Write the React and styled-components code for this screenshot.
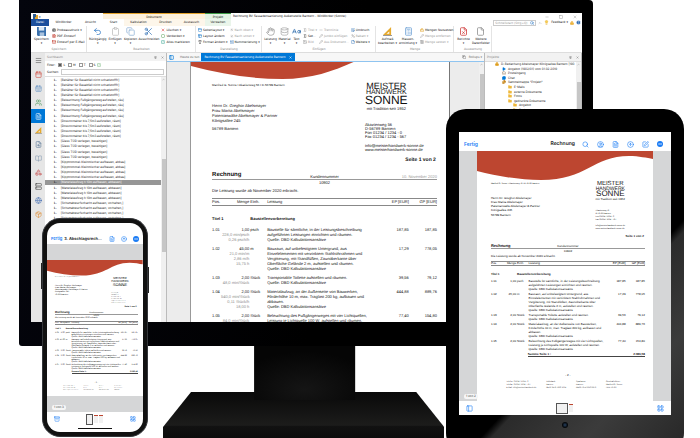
import React from "react";
import styled, { createGlobalStyle, css } from "styled-components";
import {
  Save, Printer, FileText, Mail, Undo2, Clipboard, Copy, Scissors, X, BoxSelect, CheckSquare,
  PanelTop, Layout, Type, ArrowUpLeft, ArrowDownLeft, ListOrdered, Hand, Database, CaseSensitive,
  Sigma, Image, Minus, Pencil, WrapText, Percent, File, Triangle, Calculator, Lock,
  Menu, Calendar, CalendarDays, Users, FileSearch, BookOpen, Shapes, Server, Globe, Package,
  Search, CircleUser, CircleArrowUp, SquarePen, Folder, Lightbulb, CircleHelp, Pin, Square,
  LayoutGrid, PanelLeft, Archive, MessageCircle, Inbox, Files, FileX, ChevronUp, Ellipsis, Play,
} from "lucide-react";

const UI = '"DejaVu Sans", sans-serif';
const TREE = 'Inter, sans-serif';
const PAPER = '"Liberation Sans", Arial, sans-serif';
const TOUCH = 'Inter, sans-serif';
const BLUE = "#0078d7";
const IOS = "#1a7cf5";
const RED = "#bd4630";

const Global = createGlobalStyle`
  * { box-sizing: border-box; }
  body { margin: 0; background: #fff; text-rendering: geometricPrecision; }
  button { border: 0; padding: 0; margin: 0; background: none; font: inherit; color: inherit; }
  svg { display: block; flex: none; }
`;

/* ---------- stage and devices ---------- */

const Stage = styled.main`
  position: relative;
  aspect-ratio: 700 / 438;
  overflow: hidden;
  display: grid;
  grid-template-columns: 19fr 574fr 107fr;
  align-content: start;
`;
const Computer = styled.section`
  grid-column: 2;
`;
const Bezel = styled.div`
  padding: 13px 11px 24px 12px;
  background: linear-gradient(100deg, #04050d, #000 55%);
  border-radius: 0 4px 3px 3px;
`;
const Display = styled.div`
  aspect-ratio: 551 / 309;
  overflow: hidden;
  background: #fff;
  display: flex;
  flex-direction: column;
  font: 3px/4px ${UI};
  color: #111;
`;
const Stand = styled.svg`
  width: 49%;
  margin-left: 25%;
`;
const Phone = styled.section`
  position: absolute;
  left: 6%;
  top: 49.8%;
  width: 15.1%;
  aspect-ratio: 106 / 220;
  padding: 4px;
  background: #111;
  border: 1px solid #34363a;
  border-radius: 18px;
  &::before, &::after {
    content: "";
    position: absolute;
    width: 1px;
    background: #222;
  }
  &::before { left: -2px; top: 20%; height: 12%; }
  &::after { right: -2px; top: 22%; height: 12%; }
`;
const PhoneScreen = styled.div`
  height: 100%;
  overflow: hidden;
  border-radius: 13px;
  background: #fff;
  display: flex;
  flex-direction: column;
`;
const Tablet = styled.section`
  position: absolute;
  left: 63.7%;
  top: 24.9%;
  width: 34%;
  aspect-ratio: 238 / 331;
  padding: 23px 13px 25px;
  border-radius: 20px;
  background: linear-gradient(133deg, #000 61%, #2b2b2b 63%, #3b3b3b 80%, #262626);
`;
const TabletScreen = styled.div`
  height: 100%;
  overflow: hidden;
  background: #fff;
  display: flex;
  flex-direction: column;
`;
const Camera = styled.div`
  width: 6px;
  height: 6px;
  margin: 7px auto 0;
  border-radius: 50%;
  background: radial-gradient(#27415f, #05080c 60%);
`;

/* ---------- letter ---------- */

const sizes = {
  desktop: {
    pad: "21px 12px 0 21px", wave: 18, text: 4, line: 5, sender: 3, afterSender: 15, postal: 3,
    logo: [9, 7, 12], logoLines: [7, 6, 9], logoGap: 1, contact: 4, contactLine: 4, contactTop: 12,
    contactGap: 5, pageTop: 6, page: 5, headTop: 9, head: 6, headLine: 7, introTop: 3, tableTop: 5,
    th: 6, sectionTop: 10, firstTop: 6, rowTop: 4,
    cols: ["4%", "13%", "7.5%", "50%", "13%", "12.5%"],
  },
  tablet: {
    pad: "31px 8px 0 14px", wave: 30, text: 3, line: 4, sender: 2, afterSender: 10, postal: 1,
    logo: [6, 5, 8], logoLines: [5, 4, 6], logoGap: 0, contact: 2, contactLine: 3, contactTop: 9,
    contactGap: 3, pageTop: 3, page: 3, headTop: 5, head: 4, headLine: 5, introTop: 1, tableTop: 3,
    th: 3, sectionTop: 6, firstTop: 3, rowTop: 1,
    cols: ["4%", "13%", "7.5%", "50%", "13%", "12.5%"],
  },
  phone: {
    pad: "17px 5px 0 8px", wave: 16, text: 2, line: 2, sender: 1, afterSender: 6, postal: 1,
    logo: [3, 3, 4], logoLines: [3, 3, 3], logoGap: 0, contact: 1, contactLine: 2, contactTop: 5,
    contactGap: 0, pageTop: 1, page: 2, headTop: 3, head: 3, headLine: 3, introTop: 0, tableTop: 2,
    th: 2, sectionTop: 3, firstTop: 2, rowTop: 1,
    cols: ["6%", "7%", "7%", "54%", "13%", "13%"],
  },
};

const Sheet = styled.article`
  display: grid;
  grid-template: 1fr / minmax(0, 1fr);
  background: #fff;
  overflow: hidden;
  min-height: 0;
  font-family: ${PAPER};
  font-size: ${(p) => p.$s.text}px;
  line-height: ${(p) => p.$s.line}px;
  color: #111;
  white-space: nowrap;
`;
const Wave = styled.svg`
  grid-area: 1 / 1;
  width: 100%;
  height: ${(p) => p.$s.wave}px;
`;
const Copytext = styled.div`
  grid-area: 1 / 1;
  min-width: 0;
  padding: ${(p) => p.$s.pad};
`;
const LetterHead = styled.header`
  display: grid;
  grid-template-columns: 68fr 32fr;
`;
const Sender = styled.div`
  font-size: ${(p) => p.$s.sender}px;
  margin-bottom: ${(p) => p.$s.afterSender}px;
`;
const Postal = styled.div`
  margin-top: ${(p) => p.$s.postal}px;
`;
const LogoLine = styled.div`
  font-size: ${(p) => p.$s.logo[p.$n]}px;
  line-height: ${(p) => p.$s.logoLines[p.$n]}px;
`;
const LogoBox = styled.div`
  display: flex;
  flex-direction: column;
  width: max-content;
  text-align: center;
`;
const Claim = styled.div`
  margin-top: ${(p) => p.$s.logoGap}px;
  font-size: ${(p) => (p.$s.text === 3 ? 3 : p.$s.contact)}px;
`;
const Contact = styled.address`
  font-style: normal;
  font-size: ${(p) => p.$s.contact}px;
  line-height: ${(p) => p.$s.contactLine}px;
  margin-top: ${(p) => (p.$web ? p.$s.contactGap : p.$s.contactTop)}px;
  white-space: pre-line;
`;
const PageNo = styled.div`
  margin: ${(p) => p.$s.pageTop}px 1px 0 0;
  font-weight: 700;
  font-size: ${(p) => p.$s.page}px;
  text-align: right;
`;
const TitleRow = styled.div`
  display: grid;
  grid-template-columns: 1fr auto 1fr;
  align-items: end;
  margin-top: ${(p) => p.$s.headTop}px;
  border-bottom: 1px solid #999;
`;
const Heading = styled.h2`
  margin: 0;
  font-size: ${(p) => p.$s.head}px;
  line-height: ${(p) => p.$s.headLine}px;
`;
const DateText = styled.time`
  text-align: right;
  color: #999;
`;
const Customer = styled.div`
  text-align: center;
`;
const Intro = styled.p`
  margin: ${(p) => p.$s.introTop}px 0 ${(p) => p.$s.tableTop}px;
`;
const Items = styled.table`
  width: 100%;
  table-layout: fixed;
  border-collapse: collapse;
  th, td { padding: 0; font-weight: 400; text-align: left; vertical-align: top; }
  thead th { border: solid #888; border-width: 1px 0; line-height: ${(p) => p.$s.th}px; }
  tbody td { padding-top: ${(p) => p.$s.rowTop}px; }
  tbody tr:first-child th { padding-top: ${(p) => p.$s.sectionTop}px; font-weight: 700; }
  tbody tr:nth-child(2) td { padding-top: ${(p) => p.$s.firstTop}px; }
`;
const Cell = styled.td`
  white-space: pre;
  && { text-align: ${(p) => (p.$right ? "right" : "left")}; }
  ${(p) => p.$num && css`&& { padding-right: 1px; }`}
`;
const HeadCell = styled.th`
  && { text-align: ${(p) => (p.$right ? "right" : "left")}; }
  ${(p) => p.$num && css`&& { padding-right: 1px; }`}
`;
const Muted = styled.span`
  color: #8c8c8c;
`;
const Sum = styled.div`
  display: flex;
  justify-content: space-between;
  margin: ${(p) => p.$s.rowTop}px 0 0 ${(p) => (p.$s.text === 2 ? "20%" : "24%")};
  border-bottom: 1px solid #444;
  font-weight: 700;
`;
const Folio = styled.div`
  margin-top: ${(p) => p.$s.line * 4}px;
  text-align: center;
`;
const Footer = styled.footer`
  display: flex;
  gap: 8%;
  padding: ${(p) => p.$s.line}px 10%;
  font-size: ${(p) => p.$s.contact}px;
  line-height: ${(p) => p.$s.contactLine}px;
  color: #444;
  white-space: pre;
`;

const items = [
  ["1.01", "1,00", "psch", ["228,0 min/psch", "0,26 psch/h"], "Baustelle für sämtliche, in der Leistungsbeschreibung\naufgeführten Leistungen einrichten und räumen.\nQuelle: DBD Kalkulationsansätze", "187,85", "187,85"],
  ["1.02", "45,00", "m", ["21,0 min/m", "2,86 m/h", "15,75 h"], "Bauzaun, auf unbefestigtem Untergrund, aus\nEinzelelementen mit verzinktem Stahlrohrrahmen und\nVergitterung, mit Standfüßen, Zaunoberkante über\nOberfläche Gelände 2 m, aufstellen und räumen.\nQuelle: DBD Kalkulationsansätze", "17,29", "778,05"],
  ["1.03", "2,00", "Stück", ["48,0 min/Stück"], "Transportable Toilette aufstellen und räumen.\nQuelle: DBD Kalkulationsansätze", "39,56", "79,12"],
  ["1.04", "2,00", "Stück", ["540,0 min/Stück", "0,11 Stück/h", "18,00 h"], "Materialaufzug, an der Außenseite von Bauwerken,\nFörderhöhe 10 m, max. Traglast 200 kg, aufbauen und\nabbauen.\nQuelle: DBD Kalkulationsansätze", "444,88", "889,76"],
  ["1.05", "2,00", "Stück", ["84,0 min/Stück"], "Beleuchtung des Fußgängerweges mit vier Lichtquellen,\nLeistung je Lichtquelle 100 W, aufstellen und räumen.\nQuelle: DBD Kalkulationsansätze", "77,40", "154,80"],
];

function Letter({ kind }) {
  const s = sizes[kind];
  const desktop = kind === "desktop";
  return (
    <Sheet $s={s}>
      <Wave $s={s} viewBox={desktop ? "0 0 257 18" : "0 0 176 30"} preserveAspectRatio="none" aria-hidden="true">
        <path fill={RED} d={desktop ? "M0 0V4C30 12 60 17 91 17C120 17 142 9 162 0Z" : "M0 0V20C20 25 42 29 64 29C110 29 116 5 152 5C162 5 170 7 176 8V0Z"} />
      </Wave>
      <Copytext $s={s}>
        <LetterHead>
          <div>
            <Sender $s={s}>Manfred G. Sonne I Akazienweg 56 I D-56789 Bantern</Sender>
            <div>Herrn Dr. Greghor Abelsmayer</div>
            <div>Frau Marita Abelsmayer</div>
            <div>Patentanwälte Abelsmayer &amp; Partner</div>
            <div>Königsallee 245</div>
            <Postal $s={s}>56789 Bantern</Postal>
          </div>
          <div>
            <LogoBox>
              <LogoLine $s={s} $n={0}>MEISTER</LogoLine>
              <LogoLine $s={s} $n={1}>HANDWERK</LogoLine>
              <LogoLine $s={s} $n={2}>SONNE</LogoLine>
              <Claim $s={s}>mit Tradition seit 1952</Claim>
            </LogoBox>
            <Contact $s={s}>{"Akazienweg 56\nD-56789 Bantern\nFon 01234 / 1234 - 0\nFax 01234 / 1234 - 567"}</Contact>
            <Contact $s={s} $web>{"info@meisterhandwerk-sonne.de\nwww.meisterhandwerk-sonne.de"}</Contact>
            <PageNo $s={s}>Seite 1 von 2</PageNo>
          </div>
        </LetterHead>
        <TitleRow $s={s}>
          <Heading $s={s}>Rechnung</Heading>
          <span>Kundennummer</span>
          {desktop && <DateText>10. November 2020</DateText>}
        </TitleRow>
        <Customer>10902</Customer>
        <Intro $s={s}>Die Leistung wurde ab November 2020 erbracht.</Intro>
        <Items $s={s}>
          <colgroup>{s.cols.map((w, i) => <col key={i} width={w} />)}</colgroup>
          <thead>
            <tr>
              <HeadCell>Pos.</HeadCell>
              <HeadCell $right $num>Menge</HeadCell>
              <HeadCell>Einh.</HeadCell>
              <HeadCell>Leistung</HeadCell>
              <HeadCell $right>EP [EUR]</HeadCell>
              <HeadCell $right>GP [EUR]</HeadCell>
            </tr>
          </thead>
          <tbody>
            <tr><HeadCell colSpan={2}>Titel 1</HeadCell><HeadCell colSpan={4}>Baustellenvorbereitung</HeadCell></tr>
            {items.map(([pos, n, unit, sub, text, ep, gp]) => (
              <tr key={pos}>
                <Cell>{pos}</Cell>
                <Cell $right $num>{n}{desktop && <Muted>{"\n" + sub.join("\n")}</Muted>}</Cell>
                <Cell>{unit}</Cell>
                <Cell>{text}</Cell>
                <Cell $right>{ep}</Cell>
                <Cell $right>{gp}</Cell>
              </tr>
            ))}
          </tbody>
        </Items>
        {!desktop && (
          <>
            <Sum $s={s}><span>Summe Seite 1 :</span><span>2.089,58</span></Sum>
            <Folio $s={s}>- 2 -</Folio>
            <Footer $s={s}>
              <span>{"Telefon  01234 / 1234 - 0\nTelefax  01234 / 1234 - 567\nE-Mail  info@meisterhandwerk.de"}</span>
              <span>{"Volksbank\nBantern\nDE12 3456 7890 1234"}</span>
              <span>{"Sparkasse\nBantern\nDE98 7654 3210 9876"}</span>
              <span>{"Geschäftsführer\nManfred G. Sonne\nHRB 56789"}</span>
            </Footer>
          </>
        )}
      </Copytext>
    </Sheet>
  );
}

/* ---------- desktop window chrome ---------- */

const TitleBar = styled.div`
  display: grid;
  grid-template-columns: 72fr 102fr 26fr 351fr;
  height: 6px;
  line-height: 6px;
  white-space: nowrap;
`;
const Quick = styled.div`
  display: flex;
  align-items: center;
  gap: 1px;
  padding-left: 2px;
`;
const Context = styled.div`
  text-align: center;
  background: ${(p) => (p.$green ? "#e3f2e3" : "#fdf1dc")};
  border-top: 1px solid ${(p) => (p.$green ? "#3d9a46" : "#e3a32c")};
`;
const Caption = styled.div`
  display: flex;
  justify-content: space-between;
  padding: 0 5px 0 2px;
`;
const WindowButtons = styled.div`
  display: flex;
  align-items: center;
  gap: 10px;
  color: #777;
`;
const TabRow = styled.nav`
  display: grid;
  grid-template-columns: 18fr 29fr 25fr 21fr 29fr 25fr 27fr 26fr 351fr;
  height: 7px;
  line-height: 7px;
  text-align: center;
`;
const RibbonTab = styled.button`
  text-align: center;
  background: ${(p) => p.$bg || "#fff"};
  color: ${(p) => (p.$file ? "#fff" : "#222")};
`;
const TabTools = styled.div`
  display: flex;
  justify-content: flex-end;
  align-items: center;
  gap: 2px;
  padding-right: 1px;
`;
const QuickSearch = styled.label`
  display: flex;
  align-items: center;
  width: 43px;
  height: 6px;
  padding: 0 1px;
  border: 1px solid #ccc;
`;
const Field = styled.input`
  flex: 1;
  min-width: 0;
  height: ${(p) => (p.$boxed ? 6 : 4)}px;
  padding: 0;
  border: ${(p) => (p.$boxed ? "1px solid #ccc" : "0")};
  outline: 0;
  background: #fff;
  font: 3px/4px ${UI};
  &::placeholder { color: #999; }
`;
const Ribbon = styled.div`
  display: grid;
  grid-template-columns: 56fr 109fr 66fr 114fr 78fr 38fr 90fr;
  height: 27px;
  flex: none;
  border-bottom: 1px solid #ddd;
`;
const Group = styled.section`
  display: flex;
  flex-direction: column;
  justify-content: space-between;
  padding: 1px 1px 1px 2px;
  border-right: 1px solid #e4e4e4;
  white-space: nowrap;
  min-width: 0;
`;
const GroupBody = styled.div`
  display: flex;
  gap: 2px;
`;
const GroupName = styled.div`
  text-align: center;
  color: #888;
`;
const BigSet = styled.div`
  display: flex;
  align-items: flex-start;
  gap: 1px;
`;
const Big = styled.button`
  display: flex;
  flex-direction: column;
  align-items: center;
  min-width: ${(p) => p.$w}px;
  line-height: 4px;
  color: #111;
  white-space: pre-line;
  svg { margin-bottom: 1px; }
`;
const SmallCol = styled.div`
  display: flex;
  flex-direction: column;
  gap: 2px;
  min-width: 0;
  padding-top: 1px;
`;
const Small = styled.button`
  display: flex;
  align-items: center;
  gap: 1px;
  height: 4px;
  color: ${(p) => (p.$off ? "#999" : "#111")};
`;

const groups = [
  ["Speichern", [[Save, "Speichern\n▾", "#2d6cb0", 17]], [[[Printer, "Probeausdruck ▾", "#444"], [FileText, "PDF-Entwurf", "#c0392b"], [Mail, "Entwurf per E-Mail", "#c0392b"]]]],
  ["Bearbeiten", [[Undo2, "Rückgängig\n▾", "#2f78c4", 17], [Clipboard, "Einfügen\n▾", "#bbb", 15], [Copy, "Kopieren\n▾", "#8fb2d6", 14], [Scissors, "Ausschneiden", "#3b78b8", 20]], [[[X, "Löschen ▾", "#d33"], [BoxSelect, "Verdecken ▾", "#6a6"], [CheckSquare, "Alles markieren", "#4a9"]]]],
  ["Darstellung", [], [[[PanelTop, "Seitenlayout ▾", "#3b8bd0"], [Layout, "Layout ändern", "#3b8bd0"], [Type, "Format ändern ▾", "#333"]], [[ArrowUpLeft, "Nach oben ▾", "#aaa", 1], [ArrowDownLeft, "Nach unten ▾", "#aaa", 1], [ListOrdered, "Nummerierung ▾", "#3b78b8"]]]],
  ["Einfügen", [[Hand, "Leistung\n▾", "#999", 13], [Database, "Material\n▾", "#aaa", 13], [CaseSensitive, "Text\n▾", "#336fae", 9]], [[[Sigma, "Titel ▾", "#999", 1], [Sigma, "Set...", "#444"], [Image, "Bild", "#aaa", 1]], [[Minus, "Trennlinie", "#aaa", 1], [Pencil, "Jumbo einfügen", "#aaa", 1], [Pencil, "Aus Dokument...", "#aaa", 1]], [[WrapText, "Umbruch", "#3b78b8"], [Percent, "Rabatt ▾", "#aaa", 1], [File, "Weitere ▾", "#3b78b8"]]]],
  ["Menge", [[Triangle, "Aufmaß\nbearbeiten ▾", "#e0a020", 19], [Calculator, "Massen-\nermittlung ▾", "#6ea1d6", 20]], [[[Lock, "Mengen festsetzen", "#e0a020"], [Pencil, "Menge entfernen", "#aaa", 1], [Calculator, "Menge setzen ▾", "#999", 1]]]],
  ["Auswertung", [[FileX, "Berichte\n▾", "#c33", 15], [File, "Weitere\nDatenfelder", "#888", 17]], []],
];

function AngleIcon({ size }) {
  return (
    <svg width={size} height={size} viewBox="0 0 10 10" aria-hidden="true">
      <path d="M9 0V9H0ZM7 5L4 7.5H7Z" fill="#e6aa2e" fillRule="evenodd" />
      <path d="M0 9.5H10" stroke="#888" strokeWidth="1" />
    </svg>
  );
}
function SaveIcon({ size }) {
  return (
    <svg width={size} height={size} viewBox="0 0 10 10" aria-hidden="true">
      <path d="M0 0H10V10H1L0 9Z" fill="#3a70ac" />
      <path d="M2 0H8V4H2Z" fill="#dce8f5" />
      <path d="M3 6H8V10H3Z" fill="#a9c2dd" />
    </svg>
  );
}

function RibbonIcon({ icon: Icon, color }) {
  if (Icon === Triangle) return <AngleIcon size={9} />;
  if (Icon === Save) return <SaveIcon size={9} />;
  return <Icon size={9} color={color} strokeWidth={2} />;
}

/* ---------- desktop body ---------- */

const Body = styled.div`
  flex: 1;
  min-height: 0;
  display: grid;
  grid-template-columns: 14fr 122fr 318fr 97fr;
`;
const Rail = styled.nav`
  background: #e6e6e6;
  display: flex;
  flex-direction: column;
`;
const RailButton = styled.button`
  height: 14px;
  display: grid;
  place-items: center;
  background: ${(p) => (p.$on ? BLUE : "transparent")};
`;
const Pane = styled.section`
  display: flex;
  flex-direction: column;
  min-width: 0;
  min-height: 0;
  overflow: hidden;
  border-right: 1px solid #bbb;
  background: #fff;
`;
const PaneHead = styled.header`
  display: flex;
  align-items: center;
  justify-content: space-between;
  height: 8px;
  flex: none;
  padding: 0 2px;
  background: #f2f2f2;
  color: #888;
`;
const Inline = styled.div`
  display: flex;
  align-items: center;
  gap: 4px;
`;
const Filters = styled.div`
  display: flex;
  align-items: center;
  gap: 2px;
  height: 7px;
  padding: 0 2px;
`;
const Check = styled.label`
  display: flex;
  align-items: center;
  gap: 1px;
  margin-left: 1px;
`;
const Tick = styled.input`
  appearance: none;
  width: 4px;
  height: 4px;
  margin: 0;
  border: 1px solid #999;
  background: ${(p) => (p.defaultChecked ? "#555" : "#fff")};
`;
const SearchRow = styled.label`
  display: flex;
  align-items: center;
  gap: 2px;
  height: 8px;
  padding: 0 2px;
`;
const TreeArea = styled.div`
  flex: 1;
  min-height: 0;
  display: flex;
  border-top: 1px solid #ddd;
`;
const TreeList = styled.ul`
  flex: 1;
  min-width: 0;
  height: ${(p) => p.$h}px;
  margin: 0;
  padding: 0;
  overflow: hidden;
  list-style: none;
  display: grid;
  grid-auto-rows: 1fr;
  font-family: ${TREE};
  white-space: nowrap;
`;
const TreeRow = styled.li`
  display: flex;
  align-items: center;
  gap: ${(p) => (p.$depth ? 2 : 4)}px;
  padding-left: ${(p) => p.$depth || 9}px;
  background: ${(p) => (p.$on ? "#969696" : "transparent")};
  color: ${(p) => (p.$on ? "#fff" : "#222")};
  b { color: #111; }
`;
const Scroll = styled.div`
  width: 5px;
  flex: none;
  background: #f0f0f0;
  display: flex;
  flex-direction: column;
  align-items: center;
  padding-top: 1px;
  color: #555;
`;
const Thumb = styled.div`
  width: 4px;
  height: ${(p) => p.$h}%;
  margin-top: ${(p) => p.$top}px;
  background: #c6c6c6;
`;
const DocTabs = styled.div`
  display: flex;
  align-items: stretch;
  height: 9px;
  flex: none;
  background: #f7f7f7;
  border-bottom: 1px solid #8fc4f0;
`;
const DocTab = styled.button`
  display: flex;
  align-items: center;
  gap: 3px;
  padding: 0 ${(p) => (p.$on ? 3 : 2)}px;
  background: ${(p) => (p.$on ? BLUE : "transparent")};
  color: ${(p) => (p.$on ? "#fff" : "#666")};
`;
const IconTab = styled(DocTab)`
  padding: 0 4px 0 2px;
`;
const Spacer = styled.div`
  flex: 1;
`;
const Workspace = styled.div`
  flex: 1;
  min-height: 0;
  display: grid;
  grid-template-columns: 24fr 258fr 29fr 5px;
  background: #ececec;
`;
const Margin = styled.div`
  border-right: ${(p) => (p.$edge ? "1px solid #999" : "0")};
`;
const PaperEdge = styled.div`
  display: grid;
  min-height: 0;
  overflow: hidden;
  border-right: 1px solid #777;
`;

const names = [
  "[Behälter für Bauabfall nicht schadstofffr]",
  "[Beleuchtung Fußgängerweg aufstellen, räu]",
  "[Rosscontainer bis 7,5m3 aufstellen, räum]",
  "[Glass TÜR verlegen, beseitigen]",
  "[Kipptrommel-Kleinmischer aufbauen, abbau]",
  "[Materialaufzug h 10m aufbauen, abbauen]",
  "[Schuttabwurfschacht aufbauen, vorhalten,]",
].flatMap((n) => [n, n, n, n]);

const rail = [
  [Menu, "#555", "Menü"], [Calendar, "#d1483a", "Kalender"], [CalendarDays, "#5f8fc2", "Termine"], [Users, "#4c9a58", "Adressen"],
  [FileText, "#fff", "Dokumente"], [Triangle, "#e0a020", "Aufmaß"], [FileSearch, "#5a7796", "Suche"], [BookOpen, "#8a9fb5", "Katalog"],
  [Shapes, "#c33b3b", "Material"], [Server, "#444", "Geräte"], [Globe, "#4c74b5", "Web"], [Package, "#e0913a", "Lager"],
];

const projects = [
  [10, Lock, "#e0a020", "D: Bedachung Abelsmayer Königsallee Bantern [190"],
  [17, Play, BLUE, "Angebot (1902/01) vom 01.02.2019"],
  [17, Inbox, "#8a6b4a", "Posteingang"],
  [17, MessageCircle, BLUE, "Chat"],
  [17, Files, "#c88a20", 'Sammelmappe "Projekt"'],
  [23, Folder, "#f0b93a", "E-Mails"],
  [23, Folder, "#f0b93a", "externe Dokumente"],
  [23, Folder, "#f0b93a", "Fotos"],
  [23, Folder, "#f0b93a", "gedruckte Dokumente"],
  [28, Folder, "#f0b93a", "Angebot"],
  [28, Folder, "#f0b93a", "Rechnung"],
];

function DesktopApp() {
  return (
    <Display>
      <TitleBar>
        <Quick>
          <svg width="5" height="5" viewBox="0 0 5 5" aria-hidden="true"><path fill="#2b5c92" d="M0 0H3V5H0Z" /><path fill="#e3a32c" d="M3 1H5V5H2V3H3Z" /></svg>
          <span>▾</span>
        </Quick>
        <Context>Dokument</Context>
        <Context $green>Projekt</Context>
        <Caption>
          <span>Rechnung BV Fassadensanierung Außenstelle Bantern - WinWorker (Sonne)</span>
          <WindowButtons>
            <button aria-label="Minimieren"><Minus size={4} /></button>
            <button aria-label="Maximieren"><Square size={4} /></button>
            <button aria-label="Schließen"><X size={4} /></button>
          </WindowButtons>
        </Caption>
      </TitleBar>
      <TabRow>
        <RibbonTab $file $bg="#1c4f9c">Datei</RibbonTab>
        <RibbonTab>WinWorker</RibbonTab>
        <RibbonTab>Ansicht</RibbonTab>
        <RibbonTab>Start</RibbonTab>
        <RibbonTab $bg="#fdf6ea">Kalkulation</RibbonTab>
        <RibbonTab $bg="#fdf6ea">Drucken</RibbonTab>
        <RibbonTab $bg="#fdf6ea">Austausch</RibbonTab>
        <RibbonTab $bg="#eaf5ea">Verwalten</RibbonTab>
        <TabTools>
          <QuickSearch>
            <Field aria-label="Schnellstart" placeholder="Schnellstart (Strg+Q)" />
            <Search size={4} color="#2f78c4" strokeWidth={3} />
          </QuickSearch>
          <ChevronUp size={4} color="#777" />
          <Lightbulb size={5} color="#e5a516" fill="#f7cf52" />
          <button>Feedback ▾</button>
          <Lock size={4} color="#e0a020" fill="#f2bd4a" />
          <CircleHelp size={5} color="#fff" fill="#1c5faf" />
        </TabTools>
      </TabRow>
      <Ribbon>
        {groups.map(([name, bigs, cols]) => (
          <Group key={name}>
            <GroupBody>
              {bigs.length > 0 && (
                <BigSet>
                  {bigs.map(([icon, label, color, w]) => (
                    <Big key={label} $w={w}><RibbonIcon icon={icon} color={color} />{label}</Big>
                  ))}
                </BigSet>
              )}
              {cols.map((col, i) => (
                <SmallCol key={i}>
                  {col.map(([Icon, label, color, off]) => (
                    <Small key={label} $off={off}><Icon size={4} color={color} strokeWidth={3} />{label}</Small>
                  ))}
                </SmallCol>
              ))}
            </GroupBody>
            <GroupName>{name}</GroupName>
          </Group>
        ))}
      </Ribbon>
      <Body>
        <Rail>
          {rail.map(([Icon, color, label], i) => (
            <RailButton key={label} $on={i === 4} aria-label={label}>
              {Icon === Triangle ? <AngleIcon size={7} /> : <Icon size={7} color={color} strokeWidth={2} />}
            </RailButton>
          ))}
        </Rail>
        <Pane>
          <PaneHead><span>Suchbaum</span><Inline><Pin size={3} color="#333" /><X size={3} color="#333" /></Inline></PaneHead>
          <Filters>
            <span>Filter:</span>
            {["L", "M", "T", "S"].map((f, i) => (
              <Check key={f}><Tick type="checkbox" defaultChecked={i === 0} />{f}</Check>
            ))}
            <CheckSquare size={4} color="#3d9a46" />
          </Filters>
          <SearchRow>Suchen:<Field $boxed /></SearchRow>
          <TreeArea>
            <TreeList $h={144}>
              {names.map((n, i) => <TreeRow key={i} $on={i === 20}><b>L.</b>{n}</TreeRow>)}
            </TreeList>
            <Scroll><ChevronUp size={3} /><Thumb $h={38} $top={78} /></Scroll>
          </TreeArea>
        </Pane>
        <Pane>
          <DocTabs>
            <IconTab aria-label="Ansicht"><PanelLeft size={5} color={BLUE} strokeWidth={3} /></IconTab>
            <DocTab>Heute zu tun</DocTab>
            <DocTab $on>Rechnung BV Fassadensanierung Außenstelle Bantern <X size={3} strokeWidth={4} /></DocTab>
            <Spacer />
            <DocTab><Copy size={4} color="#444" />Rollups ▾</DocTab>
          </DocTabs>
          <Workspace>
            <Margin $edge />
            <PaperEdge><Letter kind="desktop" /></PaperEdge>
            <Margin />
            <Scroll><ChevronUp size={3} /><Thumb $h={36} $top={8} /></Scroll>
          </Workspace>
        </Pane>
        <Pane>
          <PaneHead><span>Projekte</span><Inline><Pin size={3} color="#333" /><X size={3} color="#333" /></Inline></PaneHead>
          <TreeArea>
            <TreeList $h={50}>
              {projects.map(([d, Icon, color, label]) => (
                <TreeRow key={label} $depth={d}><Icon size={4} color={color} fill={Icon === Inbox ? "none" : color} />{label}</TreeRow>
              ))}
            </TreeList>
            <Scroll><ChevronUp size={3} /><Thumb $h={30} $top={16} /></Scroll>
          </TreeArea>
        </Pane>
      </Body>
    </Display>
  );
}

/* ---------- touch apps ---------- */

const TouchBar = styled.header`
  display: flex;
  align-items: center;
  gap: ${(p) => (p.$small ? 2 : 7)}px;
  padding: ${(p) => (p.$small ? "10px 4px 0" : "5px 8px 0 5px")};
  height: ${(p) => (p.$small ? 21 : 19)}px;
  flex: none;
  font: 600 ${(p) => (p.$small ? 4 : 5)}px/6px ${TOUCH};
  white-space: nowrap;
  color: #111;
`;
const Done = styled.button`
  color: ${IOS};
  margin-right: ${(p) => (p.$push ? "auto" : "0")};
`;
const Actions = styled.div`
  display: flex;
  align-items: center;
  gap: ${(p) => (p.$push ? 6 : 8)}px;
  margin-left: ${(p) => (p.$push ? "auto" : "0")};
`;
const MoreDot = styled.button`
  display: grid;
  place-items: center;
  width: 6px;
  height: 6px;
  border-radius: 50%;
  background: ${IOS};
`;
const Viewer = styled.div`
  flex: 1;
  min-width: 0;
  min-height: 0;
  display: grid;
  grid-template: minmax(0, 1fr) / minmax(0, 1fr);
  padding: ${(p) => (p.$small ? "16px 0" : "0 18px")};
  background: #d5d6d7;
`;
const ViewerStack = styled.div`
  flex: 1;
  min-height: 0;
  position: relative;
  display: flex;
`;
const Badge = styled.span`
  position: absolute;
  left: 5px;
  bottom: 2px;
  padding: 0 2px;
  border-radius: 2px;
  background: #f6f6f6;
  color: #333;
  font: 3px/5px ${TOUCH};
`;
const BottomBar = styled.footer`
  display: flex;
  justify-content: space-between;
  align-items: center;
  height: 14px;
  flex: none;
  padding: 0 7px;
`;
const Thumbs = styled.div`
  display: flex;
  align-items: center;
  gap: 1px;
`;
const MiniPage = styled.div`
  width: ${(p) => (p.$on ? p.$w : 4)}px;
  height: ${(p) => (p.$on ? 11 : 8)}px;
  border: ${(p) => (p.$on ? "1px solid #555" : "0")};
  border-top: ${(p) => (p.$on ? "1px solid #555" : `1px solid ${RED}`)};
  background: #f1f1f1;
`;
const HomeBar = styled.div`
  flex: none;
  width: 34px;
  height: 1px;
  margin: 2px auto 3px;
  background: #111;
`;

function TabletApp() {
  const icon = { size: 7, color: IOS, strokeWidth: 2 };
  return (
    <Tablet>
      <TabletScreen>
        <TouchBar>
          <Done $push>Fertig</Done>
          <span>Rechnung</span>
          <Actions>
            <button aria-label="Suchen"><Search {...icon} /></button>
            <button aria-label="Kontakt"><CircleUser {...icon} /></button>
            <button aria-label="Dokument"><FileText {...icon} /></button>
            <button aria-label="Senden"><CircleArrowUp {...icon} /></button>
            <button aria-label="Bearbeiten"><SquarePen {...icon} /></button>
            <MoreDot aria-label="Mehr"><Ellipsis size={4} color="#fff" strokeWidth={3} /></MoreDot>
          </Actions>
        </TouchBar>
        <ViewerStack>
          <Viewer><Letter kind="tablet" /></Viewer>
          <Badge>1 von 2</Badge>
        </ViewerStack>
        <BottomBar>
          <button aria-label="Seitenleiste"><PanelLeft {...icon} /></button>
          <Thumbs><MiniPage $on $w={12} /><MiniPage /></Thumbs>
          <button aria-label="Übersicht"><LayoutGrid {...icon} /></button>
        </BottomBar>
      </TabletScreen>
      <Camera />
    </Tablet>
  );
}

function PhoneApp() {
  const icon = { size: 6, color: IOS, strokeWidth: 2 };
  return (
    <Phone>
      <PhoneScreen>
        <TouchBar $small>
          <Done>Fertig</Done>
          <span>3. Abschlagsrech...</span>
          <Actions $push>
            <button aria-label="Dokument"><FileText {...icon} /></button>
            <button aria-label="Senden"><CircleArrowUp {...icon} /></button>
            <MoreDot aria-label="Mehr"><Ellipsis size={4} color="#fff" strokeWidth={3} /></MoreDot>
          </Actions>
        </TouchBar>
        <ViewerStack>
          <Viewer $small><Letter kind="phone" /></Viewer>
          <Badge>1 von 3</Badge>
        </ViewerStack>
        <BottomBar>
          <button aria-label="Archiv"><Archive {...icon} /></button>
          <Thumbs><MiniPage $on $w={7} /><MiniPage /><MiniPage /></Thumbs>
          <button aria-label="Übersicht"><LayoutGrid {...icon} /></button>
        </BottomBar>
        <HomeBar />
      </PhoneScreen>
    </Phone>
  );
}

export default function App() {
  return (
    <>
      <Global />
      <Stage>
        <Computer>
          <Bezel><DesktopApp /></Bezel>
          <Stand viewBox="0 0 281 92" aria-hidden="true">
            <defs>
              <linearGradient id="base" x1="0" y1="0" x2="0" y2="1">
                <stop offset="0" stopColor="#090909" />
                <stop offset="0.72" stopColor="#1c1c1b" />
                <stop offset="0.75" stopColor="#111" />
                <stop offset="1" stopColor="#0c0c0c" />
              </linearGradient>
              <radialGradient id="neck" cx="0.5" cy="0.8" r="0.7">
                <stop offset="0" stopColor="#151515" />
                <stop offset="1" stopColor="#050505" />
              </radialGradient>
            </defs>
            <path d="M28 46H253L281 81V92H0V81Z" fill="url(#base)" />
            <path d="M91 0H192V54H91Z" fill="url(#neck)" />
          </Stand>
        </Computer>
        <TabletApp />
        <PhoneApp />
      </Stage>
    </>
  );
}
